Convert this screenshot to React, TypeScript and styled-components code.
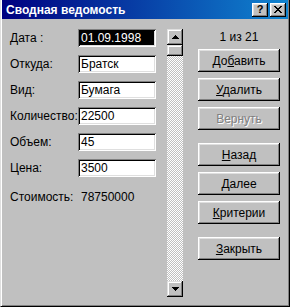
import styled, { createGlobalStyle } from "styled-components";

const GlobalStyle = createGlobalStyle`
  html, body {
    margin: 0;
    padding: 0;
    background: #c0c0c0;
  }
  body {
    font-family: "Liberation Sans", Arial, sans-serif;
    font-size: 12px;
    color: #000;
  }
`;

type Field = {
  label: string;
  value: string;
  selected?: boolean;
};

const fields: Field[] = [
  { label: "Дата :", value: "01.09.1998", selected: true },
  { label: "Откуда:", value: "Братск" },
  { label: "Вид:", value: "Бумага" },
  { label: "Количество:", value: "22500" },
  { label: "Объем:", value: "45" },
  { label: "Цена:", value: "3500" },
];

export default function App() {
  return (
    <>
      <GlobalStyle />
      <Window>
        <TitleBar>
          <Title>Сводная ведомость</Title>
          <CaptionButtons>
            <CaptionButton>?</CaptionButton>
            <CaptionButton>
              <svg width="8" height="7" viewBox="0 0 8 7">
                <path
                  d="M0 0h2v1h1v1h2v-1h1v-1h2v1h-1v1h-1v1h-1v1h1v1h1v1h1v1h-2v-1h-1v-1h-2v1h-1v1h-2v-1h1v-1h1v-1h1v-1h-1v-1h-1v-1h-1z"
                  fill="#000"
                />
              </svg>
            </CaptionButton>
          </CaptionButtons>
        </TitleBar>

        <Body>
          <Form>
            {fields.map((f) => (
              <Row key={f.label}>
                <Label>{f.label}</Label>
                <TextBox $selected={f.selected}>{f.value}</TextBox>
              </Row>
            ))}
            <ComputedRow>
              <Label>Стоимость:</Label>
              <ComputedValue>78750000</ComputedValue>
            </ComputedRow>
          </Form>

          <ScrollBar>
            <ArrowButton>
              <svg width="7" height="4" viewBox="0 0 7 4">
                <path d="M3 0h1v1h1v1h1v1h1v1h-7v-1h1v-1h1v-1h1z" fill="#000" />
              </svg>
            </ArrowButton>
            <Thumb />
            <Track />
            <ArrowButton>
              <svg width="7" height="4" viewBox="0 0 7 4">
                <path d="M0 0h7v1h-1v1h-1v1h-1v1h-1v-1h-1v-1h-1v-1h-1z" fill="#000" />
              </svg>
            </ArrowButton>
          </ScrollBar>

          <Buttons>
            <Counter>1 из 21</Counter>
            <Group>
              <Button>
                До<u>б</u>авить
              </Button>
              <Button>
                <u>У</u>далить
              </Button>
              <Button disabled>Вернуть</Button>
            </Group>
            <Group>
              <Button>
                <u>Н</u>азад
              </Button>
              <Button>
                <u>Д</u>алее
              </Button>
              <Button>
                <u>К</u>ритерии
              </Button>
            </Group>
            <Group>
              <Button>
                <u>З</u>акрыть
              </Button>
            </Group>
          </Buttons>
        </Body>
      </Window>
    </>
  );
}

const Window = styled.div`
  width: 290px;
  height: 307px;
  box-sizing: border-box;
  background: #c0c0c0;
  border-left: 1px solid #dfdfdf;
  border-right: 1px solid #000;
  border-bottom: 1px solid #000;
  box-shadow: inset 1px 0 #fff, inset -1px -1px #808080;
  padding: 0 1px 1px 1px;
  display: flex;
  flex-direction: column;
`;

const TitleBar = styled.div`
  height: 19px;
  background: linear-gradient(to right, #000080, #1084d0);
  display: flex;
  align-items: center;
  justify-content: space-between;
  padding: 0 2px 0 4px;
`;

const Title = styled.div`
  color: #fff;
  font-weight: bold;
  font-size: 12px;
  white-space: nowrap;
`;

const CaptionButtons = styled.div`
  display: flex;
  gap: 2px;
`;

const CaptionButton = styled.div`
  width: 16px;
  height: 14px;
  box-sizing: border-box;
  background: #c0c0c0;
  box-shadow: inset -1px -1px #000, inset 1px 1px #fff, inset -2px -2px #808080,
    inset 2px 2px #dfdfdf;
  display: flex;
  align-items: center;
  justify-content: center;
  font-weight: bold;
  font-size: 11px;
  line-height: 1;
  padding-bottom: 1px;
`;

const Body = styled.div`
  flex: 1;
  display: flex;
  padding: 10px 0 0 7px;
`;

const Form = styled.div`
  display: flex;
  flex-direction: column;
  gap: 8px;
  width: 147px;
`;

const Row = styled.div`
  display: grid;
  grid-template-columns: 69px 78px;
  align-items: center;
  height: 18px;
`;

const ComputedRow = styled(Row)`
  margin-top: 3px;
`;

const Label = styled.div`
  white-space: nowrap;
  padding-left: 1px;
`;

const TextBox = styled.div<{ $selected?: boolean }>`
  height: 18px;
  box-sizing: border-box;
  padding: 2px 3px;
  line-height: 14px;
  background: ${(p) => (p.$selected ? "#000" : "#fff")};
  color: ${(p) => (p.$selected ? "#fff" : "#000")};
  box-shadow: inset 1px 1px #808080, inset -1px -1px #fff, inset 2px 2px #000,
    inset -2px -2px #dfdfdf;
  white-space: nowrap;
`;

const ComputedValue = styled.div`
  padding-left: 3px;
`;

const ScrollBar = styled.div`
  width: 16px;
  height: 268px;
  margin-left: 11px;
  display: flex;
  flex-direction: column;
`;

const ArrowButton = styled.div`
  width: 16px;
  height: 16px;
  flex: none;
  box-sizing: border-box;
  background: #c0c0c0;
  box-shadow: inset -1px -1px #000, inset 1px 1px #dfdfdf, inset -2px -2px #808080,
    inset 2px 2px #fff;
  display: flex;
  align-items: center;
  justify-content: center;
`;

const Thumb = styled(ArrowButton)`
  height: 11px;
`;

const Track = styled.div`
  flex: 1;
  background: repeating-conic-gradient(#fff 0 25%, #c0c0c0 0 50%) 0 0 / 2px 2px;
`;

const Buttons = styled.div`
  width: 82px;
  margin-left: 15px;
  display: flex;
  flex-direction: column;
  gap: 13px;
`;

const Counter = styled.div`
  height: 16px;
  line-height: 16px;
  text-align: center;
  margin-bottom: -9px;
`;

const Group = styled.div`
  display: flex;
  flex-direction: column;
  gap: 6px;
`;

const Button = styled.button`
  all: unset;
  height: 23px;
  box-sizing: border-box;
  text-align: center;
  font-family: "Liberation Sans", Arial, sans-serif;
  font-size: 12px;
  background: #c0c0c0;
  color: #000;
  box-shadow: inset -1px -1px #000, inset 1px 1px #fff, inset -2px -2px #808080,
    inset 2px 2px #dfdfdf;

  &:disabled {
    color: #808080;
    text-shadow: 1px 1px #fff;
  }
`;
